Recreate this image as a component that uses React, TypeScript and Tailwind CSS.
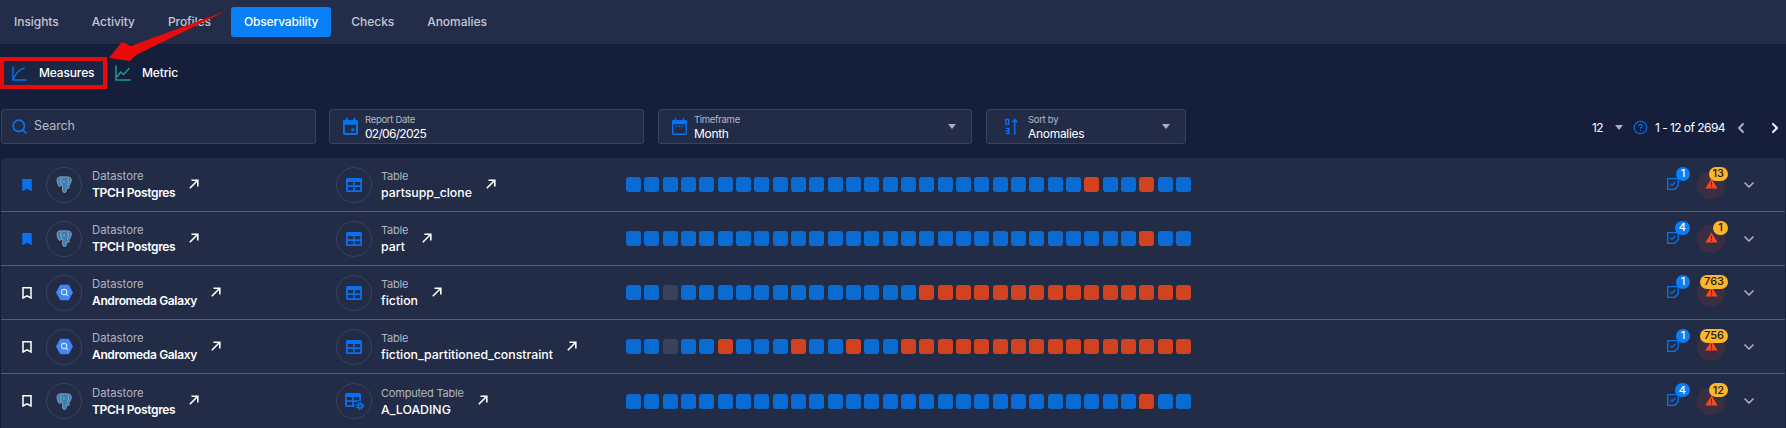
import { ChevronDown, ChevronLeft, ChevronRight, CircleHelp, Search } from 'lucide-react';

const font = { fontFamily: 'Inter, sans-serif' };

const tabs = ['Insights', 'Activity', 'Profiles', 'Observability', 'Checks', 'Anomalies'];

type Row = {
  saved: boolean;
  store: 'postgres' | 'bigquery';
  storeName: string;
  tableLabel: string;
  tableName: string;
  computed?: boolean;
  red: number[];
  gray?: number[];
  checks: number;
  alerts: number;
};

const from = (start: number) => Array.from({ length: 31 - start }, (_, i) => start + i);

const rows: Row[] = [
  { saved: true, store: 'postgres', storeName: 'TPCH Postgres', tableLabel: 'Table', tableName: 'partsupp_clone', red: [25, 28], checks: 1, alerts: 13 },
  { saved: true, store: 'postgres', storeName: 'TPCH Postgres', tableLabel: 'Table', tableName: 'part', red: [28], checks: 4, alerts: 1 },
  { saved: false, store: 'bigquery', storeName: 'Andromeda Galaxy', tableLabel: 'Table', tableName: 'fiction', red: from(16), gray: [2], checks: 1, alerts: 763 },
  { saved: false, store: 'bigquery', storeName: 'Andromeda Galaxy', tableLabel: 'Table', tableName: 'fiction_partitioned_constraint', red: [5, 9, 12, ...from(15)], gray: [2], checks: 1, alerts: 756 },
  { saved: false, store: 'postgres', storeName: 'TPCH Postgres', tableLabel: 'Computed Table', tableName: 'A_LOADING', computed: true, red: [28], checks: 4, alerts: 12 },
];

function Caret() {
  return <span className="block h-0 w-0 border-x-[4.5px] border-t-[5px] border-x-transparent border-t-[#aab0bd]" />;
}

function LinkArrow() {
  return (
    <svg width="10" height="10" viewBox="0 0 10 10" fill="none" stroke="#fff" strokeWidth="1.600" className="shrink-0 -translate-y-[1px]">
      <path d="M.8 9.300L8.500 1.500M2.500 1.200h6.300v6.300" />
    </svg>
  );
}

function Elephant() {
  return (
    <svg width="17" height="19" viewBox="0 0 18 19" fill="#3f7cb0" stroke="#a9c6de" strokeWidth="0.7">
      <path d="M4 1.500C1.800 1.500.8 3.500 1.200 6c.4 2.400 1.200 5 2.400 5.600.9.4 1.600-.7 2-1.600.5.4 1 .6 1.400.5l-.1 4.500c0 2 1 3 2.200 3 1.400 0 1.800-1.200 1.800-2.600v-1.900c1 .2 2.600.2 3.400-.7.4-.5-.6-.6-1-.8 1.300-1.900 3-5.400 3-7.500C16.200 2.400 14 1.300 12 1.500 10.800 1.200 9.500 1.100 8.500 1.500 7.300 1.300 5.400 1.300 4 1.500z" />
      <path d="M5.500 3c-.8 2-.5 5 .2 7M12.500 3c1 2 .7 5-.5 7.500M8.500 5v3" fill="none" />
    </svg>
  );
}

function BigQuery() {
  return (
    <svg width="19" height="17" viewBox="0 0 24 22">
      <path d="M6.500 1h11L23 11l-5.500 10h-11L1 11z" fill="#4285f4" />
      <circle cx="11.500" cy="10.500" r="3.500" fill="none" stroke="#cfe0fb" strokeWidth="1.500" />
      <path d="M14 13l2.500 2.500" stroke="#cfe0fb" strokeWidth="1.500" />
    </svg>
  );
}

function TableIcon({ computed }: { computed?: boolean }) {
  return (
    <svg width="20" height="18" viewBox="0 0 20 18" className={computed ? 'translate-x-[1px] translate-y-[1px]' : 'translate-x-[2px] translate-y-[2px]'}>
      <path
        fillRule="evenodd"
        fill="#0a6ff0"
        d="M1.500 0h13A1.500 1.500 0 0 1 16 1.500v11a1.500 1.500 0 0 1-1.500 1.500h-13A1.500 1.500 0 0 1 0 12.500v-11A1.500 1.500 0 0 1 1.500 0zM1.800 4v3.300h5.400V4zm7 0v3.300h5.400V4zM1.800 8.900v3.300h5.400V8.900zm7 0v3.300h5.400V8.900z"
      />
      {computed && (
        <g fill="none" stroke="#0a6ff0">
          <circle cx="15" cy="13" r="4.600" stroke="#222c47" strokeWidth="1.500" fill="#222c47" />
          <circle cx="15" cy="13" r="1.900" strokeWidth="1.600" />
          <circle cx="15" cy="13" r="3.500" strokeWidth="1.500" strokeDasharray="1.500 1.250" />
        </g>
      )}
    </svg>
  );
}

function CheckDoc() {
  return (
    <svg width="12" height="12" viewBox="0 0 12 12" fill="none" stroke="#0a72ee" strokeWidth="1.300">
      <path d="M.7.700h10.600v7L7.700 11.300h-7z" />
      <path d="M3 5.700l1.900 1.800 3.300-3.500" strokeWidth="1.100" />
    </svg>
  );
}

function Warning() {
  return (
    <svg width="13" height="11" viewBox="0 0 14 12" className="-translate-y-[1px]">
      <path d="M7 .5L13.700 11.500H.3z" fill="#f4491f" />
      <path d="M7 4.200v3.600M7 8.800v1.200" stroke="#3a2d3d" strokeWidth="1.100" />
    </svg>
  );
}

function FilterBox({
  icon,
  label,
  value,
  width,
  caret,
  boxClass = 'pl-[13px]',
  textClass = 'ml-[7px]',
  valueClass = 'tracking-[-0.3px]',
}: {
  icon: React.ReactNode;
  label: string;
  value: string;
  width: string;
  caret?: boolean;
  boxClass?: string;
  textClass?: string;
  valueClass?: string;
}) {
  return (
    <div className={`flex h-[35px] items-center rounded-[3px] border border-[#38425f] bg-[#222c47] pr-[15px] ${boxClass} ${width}`}>
      <span className="flex w-[15px] shrink-0 justify-center">{icon}</span>
      <div className={`flex-1 pt-[1px] ${textClass}`}>
        <div className="text-[9.5px] leading-[12px] tracking-[-0.3px] text-[#b4b9c6]">{label}</div>
        <div className={`text-[12px] leading-[15px] text-white ${valueClass}`}>{value}</div>
      </div>
      {caret && <Caret />}
    </div>
  );
}

function DataRow({ row, last }: { row: Row; last: boolean }) {
  return (
    <div className={`flex h-[54px] items-center ${last ? '' : 'border-b border-[#565e75]'}`}>
      <div className="flex w-[45px] shrink-0 justify-center pl-[7px]">
        <svg width="10" height="12" viewBox="0 0 10 12" fill={row.saved ? '#0a72ee' : 'none'} stroke={row.saved ? '#0a72ee' : '#fff'} strokeWidth="1.500">
          <path d="M1 .8h8v10.200L5 8.800 1 11z" />
        </svg>
      </div>
      <div className="flex w-[290px] shrink-0 items-center">
        <span className="flex h-[36px] w-[36px] items-center justify-center rounded-full border border-[#3a435e]">
          {row.store === 'postgres' ? <Elephant /> : <BigQuery />}
        </span>
        <div className="ml-[10px] mr-[14px]">
          <div className="text-[11.300px] leading-[14px] text-[#b0b5c3]">Datastore</div>
          <div className="mt-[2px] text-[12px] font-semibold leading-[15px] tracking-[-0.35px] text-white">{row.storeName}</div>
        </div>
        <LinkArrow />
      </div>
      <div className="flex w-[290px] shrink-0 items-center">
        <span className="flex h-[36px] w-[36px] items-center justify-center rounded-full border border-[#3a435e]">
          <TableIcon computed={row.computed} />
        </span>
        <div className="ml-[9px] mr-[14px]">
          <div className="text-[11px] leading-[14px] tracking-[-0.2px] text-[#b0b5c3]">{row.tableLabel}</div>
          <div className="mt-[2px] text-[12.300px] font-medium leading-[15px] text-white">{row.tableName}</div>
        </div>
        <LinkArrow />
      </div>
      <div className="flex shrink-0 gap-[3.33px]">
        {Array.from({ length: 31 }, (_, i) => (
          <span
            key={i}
            className={`h-[15px] w-[15px] rounded-[3px] ${row.red.includes(i) ? 'bg-[#d1421e]' : row.gray?.includes(i) ? 'bg-[#3a435e]' : 'bg-[#0a6bd3]'}`}
          />
        ))}
      </div>
      <div className="ml-auto flex items-center pr-[28px]">
        <div className="relative mr-[18px] flex h-[12px] w-[12px] translate-y-[-1px]">
          <CheckDoc />
          <span className="absolute bottom-[9px] right-[-11px] flex h-[14px] min-w-[14px] items-center justify-center rounded-full bg-[#087ff5] px-[4px] text-[11px] font-medium text-white">
            {row.checks}
          </span>
        </div>
        <div className="relative mr-[16px] flex h-[28px] w-[28px] items-center justify-center rounded-full bg-[#3a2f42]">
          <Warning />
          <span className="absolute right-[-3px] top-[-4px] flex h-[14px] min-w-[15px] items-center justify-center rounded-full bg-[#fdb52a] px-[4px] text-[11px] font-medium text-[#1a1a1a]">
            {row.alerts}
          </span>
        </div>
        <ChevronDown size={16} strokeWidth={2.500} className="text-[#aab0bd]" />
      </div>
    </div>
  );
}

export default function App() {
  return (
    <div className="relative h-[428px] w-[1786px] overflow-hidden bg-[#151f3c]" style={font}>
      <div className="flex h-[44px] items-start gap-[7px] bg-[#232d49] pl-[1px] pt-[7px]">
        {tabs.map((t) => (
          <span
            key={t}
            className={`flex h-[30px] items-center whitespace-nowrap rounded-[3px] px-[13px] text-[12px] font-medium ${t === 'Observability' ? 'bg-[#0780f7] tracking-[-0.15px] text-white' : 'tracking-[-0.05px] text-[#c3c7d1]'}`}
          >
            {t}
          </span>
        ))}
      </div>

      <div className="mt-[13px] flex h-[32px] items-center text-[12px] font-medium tracking-[-0.15px] text-white">
        <div className="flex h-[32px] w-[107px] items-center border-[4px] border-[#ea0a0a] bg-[#1b2644] pl-[8px]">
          <svg width="15" height="15" viewBox="0 0 16 16" fill="none" stroke="#0a72ee" strokeWidth="1.500">
            <path d="M1 .5v14.500h14.500M1.500 14.500C3 10 7 4 13.500 2" />
          </svg>
          <span className="ml-[12px]">Measures</span>
        </div>
        <div className="ml-[8px] flex items-center">
          <svg width="16" height="16" viewBox="0 0 16 16" fill="none" stroke="#1f9d8a" strokeWidth="1.500">
            <path d="M1 .5v14.500h14.500M2 12l3.500-5 3 2.500 6-6.500" />
          </svg>
          <span className="ml-[11px]">Metric</span>
        </div>
      </div>

      <div className="mt-[20px] flex items-center pl-[1px]">
        <div className="flex h-[35px] w-[315px] items-center rounded-[3px] border border-[#38425f] bg-[#222c47] pl-[9px]">
          <Search size={17} strokeWidth={2.500} className="text-[#0a72ee]" />
          <span className="ml-[6px] text-[12.500px] tracking-[-0.1px] text-[#b4b9c6]">Search</span>
        </div>
        <div className="ml-[13px] flex items-center gap-[14px]">
          <FilterBox
            width="w-[315px]"
            label="Report Date"
            value="02/06/2025"
            valueClass="tracking-[-0.7px]"
            icon={
              <svg width="15" height="17" viewBox="0 0 16 18" fill="#0a72ee">
                <path fillRule="evenodd" d="M3 0h2v2h6V0h2v2h1.500A1.500 1.500 0 0 1 16 3.500v13a1.500 1.500 0 0 1-1.500 1.500h-13A1.500 1.500 0 0 1 0 16.500v-13A1.500 1.500 0 0 1 1.500 2H3zM2 7v9h12V7zm7 4h3v3H9z" />
              </svg>
            }
          />
          <FilterBox
            width="w-[314px]"
            label="Timeframe"
            value="Month"
            caret
            icon={
              <svg width="15" height="17" viewBox="0 0 16 18" fill="#0a72ee">
                <path fillRule="evenodd" d="M3 0h1.500v2h7V0H13v2h1.500A1.500 1.500 0 0 1 16 3.500v13a1.500 1.500 0 0 1-1.500 1.500h-13A1.500 1.500 0 0 1 0 16.500v-13A1.500 1.500 0 0 1 1.500 2H3zM1.500 6.500v10h13v-10zM4 8h1.500v1.500H4zm3.300 0h1.500v1.500H7.300zm3.200 0H12v1.500h-1.500z" />
              </svg>
            }
          />
          <FilterBox
            width="w-[200px]"
            label="Sort by"
            value="Anomalies"
            boxClass="pl-[17px]"
            textClass="ml-[9px]"
            caret
            icon={
              <svg width="15" height="17" viewBox="0 0 16 18" fill="none" stroke="#0a72ee">
                <path d="M2 1.500h3v5H2zM2 11h3v2.500H2M5 11v5.500H2" strokeWidth="1.500" />
                <path d="M11.500 18V2M9 4.500l2.500-3 2.500 3" strokeWidth="1.500" />
              </svg>
            }
          />
        </div>
        <div className="ml-auto flex items-center pr-[3px] pt-[2px] text-[12px] tracking-[-0.55px] text-white">
          <span>12</span>
          <span className="ml-[12px]"><Caret /></span>
          <CircleHelp size={15} strokeWidth={1.800} className="ml-[10px] text-[#0a72ee]" />
          <span className="ml-[7px]">1 - 12 of 2694</span>
          <ChevronLeft size={16} strokeWidth={3} className="ml-[8px] text-[#aab0bd]" />
          <ChevronRight size={16} strokeWidth={3} className="ml-[18px] text-white" />
        </div>
      </div>

      <div className="mx-[1px] mt-[14px] overflow-hidden rounded-t-[4px] bg-[#222c47]">
        {rows.map((row, i) => (
          <DataRow key={i} row={row} last={i === rows.length - 1} />
        ))}
      </div>

      <svg width="140" height="60" viewBox="0 0 140 60" className="pointer-events-none absolute left-[100px] top-[8px]">
        <path d="M9 50L22 34 31 38 126 3 36 47 30 53z" fill="#ea0a0a" />
      </svg>
    </div>
  );
}
